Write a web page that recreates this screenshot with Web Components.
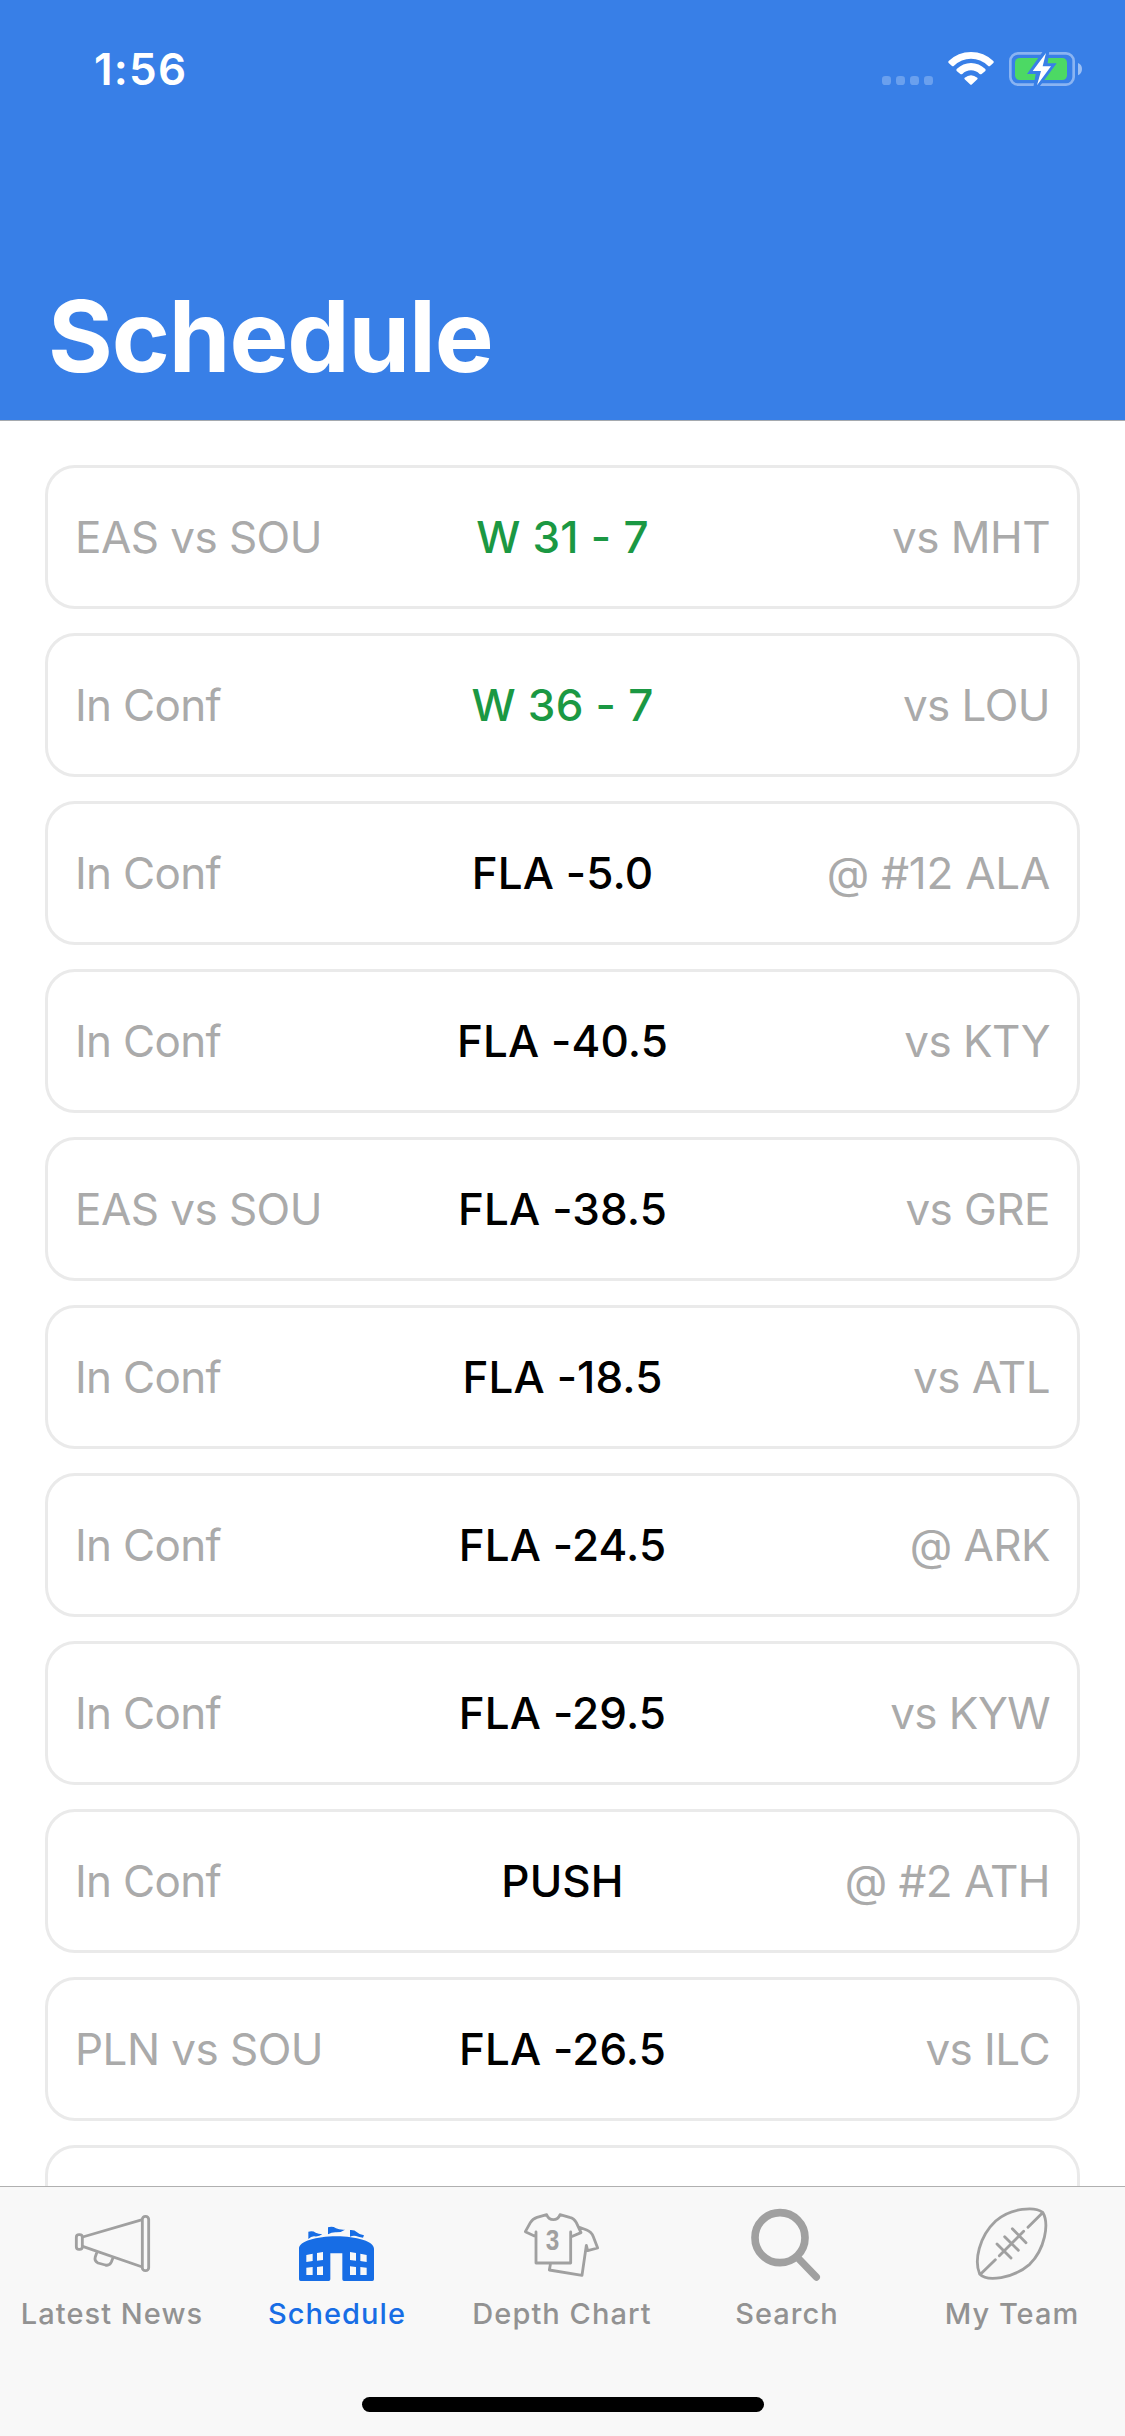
<!DOCTYPE html>
<html lang="en">
<head>
<meta charset="utf-8">
<title>Schedule</title>
<style>
html, body { margin: 0; height: 2436px; overflow: hidden; background: #fff; }
body { font-family: Inter, "Liberation Sans", sans-serif; font-feature-settings: "calt" 0; }
</style>
</head>
<body>
<schedule-app></schedule-app>
<script>
const define = (name, html, setup) => {
  const template = document.createElement('template');
  template.innerHTML = html;
  customElements.define(name, class extends HTMLElement {
    constructor() {
      super();
      this.attachShadow({ mode: 'open' }).append(template.content.cloneNode(true));
    }
    connectedCallback() { if (setup) setup(this, this.shadowRoot); }
  });
};

define('status-bar', `
<style>
:host { display: flex; justify-content: space-between; height: 110px; color: #fff; }
time { font-size: 44px; font-weight: 600; line-height: 54px; padding: 42px 0 0 94px; letter-spacing: 1.2px; }
svg { display: block; width: 265px; height: 80px; margin-top: 30px; }
</style>
<time>1:56</time>
<svg viewBox="0 0 795 240" aria-hidden="true">
  <g fill="#6aa0ee"><rect x="66" y="138" width="27" height="27" rx="10"/><rect x="108" y="138" width="27" height="27" rx="10"/><rect x="150" y="138" width="27" height="27" rx="10"/><rect x="192" y="138" width="27" height="27" rx="10"/></g>
  <g fill="#fff">
    <path d="M266 93Q294 66 333 66T400 93Q403 96 400 99L390 108Q387 110 384 107Q362 86 333 86T282 107Q279 110 276 108L266 99Q263 96 266 93Z"/>
    <path d="M290 117Q309 99 333 99T376 117Q378 120 376 123L365 132Q362 134 359 132Q348 121 333 121T307 132Q304 134 301 132L290 123Q288 120 290 117Z"/>
    <path d="M314 143Q333 128 352 143Q354 145 352 148L336 163Q333 166 330 163L314 148Q312 145 314 143Z"/>
  </g>
  <rect x="451" y="70" width="190" height="94" rx="23" fill="none" stroke="#8ab4f2" stroke-width="8"/>
  <path d="M654 99Q666 104 666 117T654 136Z" fill="#9bbff4"/>
  <rect x="465" y="84" width="156" height="66" rx="14" fill="#4cd964"/>
  <path d="M550 62L501 132H527L520 172H537L590 100H563L568 62Z" fill="#387fe7"/>
  <path d="M558 69L518 123H543L531 166L573 109H548Z" fill="#fff"/>
</svg>`);

define('page-header', `
<style>
:host { display: flex; flex-direction: column; flex: none; justify-content: space-between; height: 420px; background: #387fe7; border-bottom: 1px solid #a5a9ae; color: #fff; }
h1 { margin: 0; padding: 0 48px 24px; font-size: 99px; line-height: 120px; font-weight: 700; letter-spacing: -1.1px; }
</style>
<status-bar></status-bar>
<h1><slot></slot></h1>`);

define('game-row', `
<style>
:host { display: grid; grid-template-columns: 1fr auto 1fr; align-items: center; flex: none; box-sizing: border-box; height: 144px; padding: 0 27px; border: 3px solid #eaeaea; border-radius: 30px; font-size: 44px; line-height: 54px; letter-spacing: -.55px; color: #aaa; background: #fff; }
.line { color: #000; font-weight: 500; letter-spacing: .1px; }
:host([won]) .line { color: #1b9843; letter-spacing: .25px; }
:host([kind="In Conf"]) .kind { letter-spacing: -.7px; }
:host([ranked]) .opponent { letter-spacing: -.25px; }
.opponent { text-align: right; }
</style>
<span class="kind"></span><span class="line"></span><span class="opponent"></span>`,
(host, root) => {
  for (const part of ['kind', 'line', 'opponent'])
    root.querySelector('.' + part).textContent = host.getAttribute(part) || '';
});

define('game-list', `
<style>
:host { display: flex; flex-direction: column; gap: 24px; flex: 1; min-height: 0; overflow: hidden; padding: 44px 45px 0; }
</style>
<slot></slot>`);

const icons = {
  news: ['0 171 675 324', `<g fill="none" stroke="#a0a0a0" stroke-width="8.5" stroke-linejoin="round">
    <rect x="229" y="314" width="18" height="44" rx="8"/><rect x="427" y="259" width="19" height="163" rx="9"/>
    <path d="M248 321L427 269M248 349L427 411M291 366L286 380Q282 393 294 399L316 405Q329 408 334 396L339 383"/></g>`],
  stadium: ['0 51 675 324', `<path fill="#176de5" fill-rule="evenodd" d="M222 236C222 214 274 199 334 199S447 214 447 236V328Q447 333 442 333H357Q352 333 352 328V250H316V328Q316 333 311 333H227Q222 333 222 328ZM244 255L263 251V273L244 276ZM276 249L294 246V270L276 272ZM375 246L393 249V272L375 270ZM406 251L425 255V276L406 273ZM244 293L263 291V315H244ZM276 291L294 289V315H276ZM375 289L393 291V315H375ZM406 291L425 293V315H406Z"/>
    <path fill="#176de5" d="M250 185Q263 181 272 188Q280 192 292 193Q282 201 267 199Q258 200 250 207ZM309 172Q323 168 333 175Q343 180 360 179Q350 187 334 187Q321 186 309 193ZM375 180Q389 179 396 187Q404 195 417 196L414 203Q402 201 393 198Q384 196 375 200Z"/>`],
  jersey: ['0 51 675 324', `<g fill="none" stroke="#a0a0a0" stroke-width="8.5" stroke-linejoin="round" stroke-linecap="round">
    <path d="M258 186V279H362V186M258 200L226 185L241 158Q248 146 261 142L290 134Q296 149 310 149T330 134L359 142Q372 145 379 158L393 188L362 201M386 171L410 180Q424 185 430 200L443 234L413 242L409 226L396 316L298 300L301 284"/></g>
    <text transform="translate(287 241) scale(.84 1)" font-family="Liberation Sans" font-size="87" font-weight="700" fill="#a0a0a0">3</text>`],
  search: ['0 51 675 324', `<g fill="none" stroke="#a0a0a0"><circle cx="315" cy="203" r="75" stroke-width="23"/><path d="M369 264L424 321" stroke-width="22" stroke-linecap="round"/></g>`],
  football: ['0 171 675 324', `<g fill="none" stroke="#a0a0a0" stroke-width="8.5" stroke-linecap="round" stroke-linejoin="round">
    <path d="M428 247C405 229 333 233 287 273C237 320 222 392 239 432C261 456 339 446 389 403C434 358 449 282 428 247ZM242 432L286 389M384 292L427 249M298 377L371 304M291 342L333 384M314 320L355 361M337 296L378 338"/></g>`]
};

define('tab-item', `
<style>
:host { display: flex; flex-direction: column; flex: 1 1 0; align-items: center; color: #929292; }
:host([active]) { color: #176de5; }
svg { display: block; width: 225px; height: 108px; }
span { font-size: 29px; line-height: 36px; font-weight: 500; letter-spacing: 1.05px; white-space: nowrap; margin-top: 1px; padding-right: 1px; }
</style>
<svg aria-hidden="true"></svg><span><slot></slot></span>`,
(host, root) => {
  const [viewBox, shapes] = icons[host.getAttribute('icon')];
  const svg = root.querySelector('svg');
  svg.setAttribute('viewBox', viewBox);
  svg.innerHTML = shapes;
});

define('tab-bar', `
<style>
:host { display: flex; flex-direction: column; flex: none; box-sizing: border-box; height: 250px; border-top: 1px solid #b0b0b0; background: #f8f8f8; justify-content: space-between; align-items: center; padding-bottom: 24px; }
nav { display: flex; width: 100%; }
.home { width: 402px; height: 15px; border-radius: 8px; background: #000; }
</style>
<nav><slot></slot></nav><div class="home"></div>`);

define('schedule-app', `
<style>:host { display: flex; flex-direction: column; width: 1125px; height: 2436px; overflow: hidden; background: #fff; }</style>
<page-header>Schedule</page-header>
<game-list>
  <game-row kind="EAS vs SOU" line="W 31 - 7" opponent="vs MHT" won></game-row>
  <game-row kind="In Conf" line="W 36 - 7" opponent="vs LOU" won></game-row>
  <game-row kind="In Conf" line="FLA -5.0" opponent="@ #12 ALA" ranked></game-row>
  <game-row kind="In Conf" line="FLA -40.5" opponent="vs KTY"></game-row>
  <game-row kind="EAS vs SOU" line="FLA -38.5" opponent="vs GRE"></game-row>
  <game-row kind="In Conf" line="FLA -18.5" opponent="vs ATL"></game-row>
  <game-row kind="In Conf" line="FLA -24.5" opponent="@ ARK"></game-row>
  <game-row kind="In Conf" line="FLA -29.5" opponent="vs KYW"></game-row>
  <game-row kind="In Conf" line="PUSH" opponent="@ #2 ATH"></game-row>
  <game-row kind="PLN vs SOU" line="FLA -26.5" opponent="vs ILC"></game-row>
  <game-row></game-row>
</game-list>
<tab-bar>
  <tab-item icon="news">Latest News</tab-item>
  <tab-item icon="stadium" active>Schedule</tab-item>
  <tab-item icon="jersey">Depth Chart</tab-item>
  <tab-item icon="search">Search</tab-item>
  <tab-item icon="football">My Team</tab-item>
</tab-bar>`);
</script>
</body>
</html>
